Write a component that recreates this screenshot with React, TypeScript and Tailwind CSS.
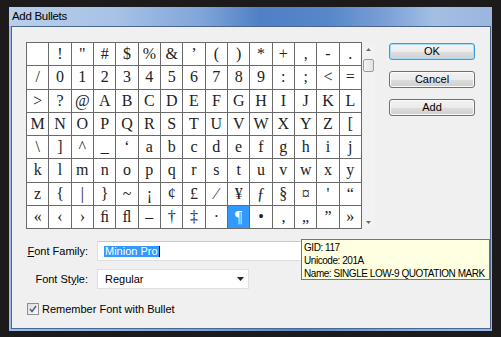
const glyphs: string[] = [
  " ", "!", "\"", "#", "$", "%", "&", "\u2019", "(", ")", "*", "+", ",", "-", ".",
  "/", "0", "1", "2", "3", "4", "5", "6", "7", "8", "9", ":", ";", "<", "=",
  ">", "?", "@", "A", "B", "C", "D", "E", "F", "G", "H", "I", "J", "K", "L",
  "M", "N", "O", "P", "Q", "R", "S", "T", "U", "V", "W", "X", "Y", "Z", "[",
  "\\", "]", "^", "_", "\u2018", "a", "b", "c", "d", "e", "f", "g", "h", "i", "j",
  "k", "l", "m", "n", "o", "p", "q", "r", "s", "t", "u", "v", "w", "x", "y",
  "z", "{", "|", "}", "~", "\u00a1", "\u00a2", "\u00a3", "\u2044", "\u00a5", "\u0192", "\u00a7", "\u00a4", "'", "\u201c",
  "\u00ab", "\u2039", "\u203a", "\ufb01", "\ufb02", "\u2013", "\u2020", "\u2021", "\u00b7", "\u00b6", "\u2022", "\u201a", "\u201e", "\u201d", "\u00bb",
];

const SELECTED = 114;

function Button({ label, primary }: { label: string; primary?: boolean }) {
  return (
    <div
      className={
        "flex h-[17px] w-[86px] items-center justify-center rounded-[3px] border text-[11px] text-black " +
        (primary
          ? "border-[#3c9be0] bg-[linear-gradient(180deg,#f4f4f4_0%,#ececec_50%,#dedede_51%,#d2d2d2_100%)] shadow-[inset_0_0_0_1px_#a6dcf7]"
          : "border-[#707070] bg-[linear-gradient(180deg,#f2f2f2_0%,#ebebeb_50%,#dddddd_51%,#cfcfcf_100%)] shadow-[inset_0_0_0_1px_#fbfbfb]")
      }
    >
      {label}
    </div>
  );
}

function Scrollbar() {
  return (
    <div className="flex h-[187px] w-[13px] flex-col items-center bg-[#f2f2f2]">
      <div className="flex h-[14px] items-center justify-center">
        <svg width="5" height="3" viewBox="0 0 5 3">
          <path d="M0 3 L2.5 0 L5 3 Z" fill="#6b6b6b" />
        </svg>
      </div>
      <div className="mt-[3px] h-[13px] w-[11px] rounded-[2px] border border-[#9c9c9c] bg-[linear-gradient(90deg,#f4f4f4,#e2e2e2)]" />
      <div className="flex-1" />
      <div className="flex h-[14px] items-center justify-center">
        <svg width="5" height="3" viewBox="0 0 5 3">
          <path d="M0 0 L2.5 3 L5 0 Z" fill="#6b6b6b" />
        </svg>
      </div>
    </div>
  );
}

function GlyphGrid() {
  return (
    <div className="grid h-[187px] w-[336px] grid-cols-[repeat(15,minmax(0,1fr))] grid-rows-[repeat(8,minmax(0,1fr))] gap-px border border-[#6a6a6a] bg-[#6a6a6a]">
      {glyphs.map((g, i) => (
        <div
          key={i}
          className={
            "flex items-center justify-center font-['Liberation_Serif','DejaVu_Serif',serif] text-[16px] leading-none " +
            (i === SELECTED ? "bg-[#3399ff] text-white" : "bg-white text-[#222]")
          }
        >
          {g}
        </div>
      ))}
    </div>
  );
}

export default function App() {
  return (
    <div className="relative h-[337px] w-[501px] overflow-hidden bg-[#1c1a1b] pl-[9px] pt-[7px] font-['Liberation_Sans',Arial,sans-serif]">
      <div className="flex h-[324px] w-[483px] flex-col bg-[linear-gradient(90deg,#9fbde6,#7aa3da_40%,#5a88c9_60%,#8eb0de_85%,#9ab7df)]">
        {/* title bar */}
        <div className="flex h-[19px] items-center bg-[linear-gradient(90deg,#b9cfea_0%,#a7c2e6_22%,#7fa5d9_40%,#4f7fc5_52%,#5687c9_66%,#7aa0d6_78%,#a3bfe3_88%,#9ab6df_100%)] pl-[3px] text-[11.5px] tracking-[-0.3px] text-black">
          Add Bullets
        </div>

        {/* client */}
        <div className="mb-[2px] ml-[2px] mr-[1px] flex flex-1 flex-col border border-[#4a668f] bg-[#f0f0f0] pl-[14px] pt-[15px]">
          <div className="flex">
            <GlyphGrid />
            <Scrollbar />
            <div className="ml-[14px] mt-px flex flex-col gap-[11px]">
              <Button label="OK" primary />
              <Button label="Cancel" />
              <Button label="Add" />
            </div>
          </div>

          <div className="mt-[12px] flex items-center">
            <div className="w-[62px] text-right text-[11px] text-black">
              <span className="underline">F</span>ont Family:
            </div>
            <div className="ml-[9px] flex h-[20px] w-[278px] items-center border border-[#dcdfe3] border-t-[#c5c9ce] bg-white pl-[6px] text-[11px]">
              <span className="bg-[#3399ff] px-px leading-[11px] text-white">Minion Pro</span>
              <span className="h-[11px] w-px bg-black" />
            </div>
          </div>

          <div className="mt-[8px] flex items-center">
            <div className="w-[62px] text-right text-[11px] text-black">
              Font St<span className="underline">y</span>le:
            </div>
            <div className="ml-[9px] flex h-[20px] w-[152px] items-center justify-between border border-[#dcdfe3] bg-white pl-[7px] pr-[4px] text-[11px] text-black">
              <span>Regular</span>
              <svg width="7" height="4" viewBox="0 0 7 4">
                <path d="M0 0 L7 0 L3.5 4 Z" fill="#222" />
              </svg>
            </div>
          </div>

          <div className="mt-[12px] flex items-center gap-[3px] pl-px">
            <div className="flex h-[12px] w-[12px] items-center justify-center border border-[#8e8f8f] bg-[linear-gradient(135deg,#dcdcdc,#fbfbfb)]">
              <svg width="8" height="8" viewBox="0 0 8 8">
                <path d="M1 4 L3 6.5 L7 1" fill="none" stroke="#4a5f97" strokeWidth="1.5" />
              </svg>
            </div>
            <span className="text-[11px] text-black">Remember Font with Bullet</span>
          </div>
        </div>
      </div>

      {/* tooltip */}
      <div className="absolute left-[301px] top-[239px] h-[41px] w-[189px] border border-[#767676] bg-[#ffffe1] pl-[2px] pt-[1px] text-[10px] leading-[13px] tracking-[-0.45px] text-black">
        <div>GID: 117</div>
        <div>Unicode: 201A</div>
        <div className="whitespace-nowrap">Name: SINGLE LOW-9 QUOTATION MARK</div>
      </div>
    </div>
  );
}
